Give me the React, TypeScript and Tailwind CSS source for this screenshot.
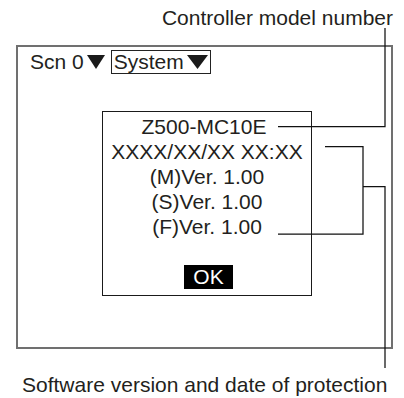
import React from "react";

function Tri({ w, h }: { w: number; h: number }) {
  return (
    <svg width={w} height={h} viewBox={`0 0 ${w} ${h}`} className="block">
      <polygon points={`0,0 ${w},0 ${w / 2},${h}`} fill="#1a1a1a" />
    </svg>
  );
}

export default function App() {
  return (
    <div className="relative w-[404px] h-[398px] bg-white text-[#231f20] font-['Liberation_Sans',Arial,sans-serif] text-[21px] overflow-hidden">
      <div className="flex justify-end pr-[11px] pt-[5px] leading-[25px]">
        Controller model number
      </div>

      <div className="ml-[16px] mt-[15px] w-[377px] h-[304px] border-2 border-[#707070] pt-[3px] pl-[12px]">
        <div className="flex items-center h-[24px]">
          <span className="leading-[24px]">Scn 0</span>
          <span className="ml-[3px]">
            <Tri w={18} h={14} />
          </span>
          <div className="ml-[6px] h-[24px] border border-[#222] flex items-center pl-[2px] pr-[2px]">
            <span className="leading-[22px]">System</span>
            <span className="ml-[3px]">
              <Tri w={21} h={14} />
            </span>
          </div>
        </div>

        <div className="mt-[37px] ml-[72px] w-[210px] h-[185px] border border-[#1a1a1a] flex flex-col items-center pt-[2px] leading-[25px]">
          <div className="mr-[6px]">Z500-MC10E</div>
          <div>XXXX/XX/XX XX:XX</div>
          <div>(M)Ver. 1.00</div>
          <div>(S)Ver. 1.00</div>
          <div>(F)Ver. 1.00</div>
          <div className="mt-[26px] ml-[3px] w-[49px] h-[24px] bg-black text-white flex items-center justify-center leading-[24px]">
            OK
          </div>
        </div>
      </div>

      <div className="mt-[23px] pl-[22px] leading-[25px]">
        Software version and date of protection
      </div>

      <svg
        className="absolute left-0 top-0 pointer-events-none"
        width={404}
        height={398}
        viewBox="0 0 404 398"
      >
        <g fill="none" stroke="#111" strokeWidth={1.25}>
          <polyline points="278,126.5 385,126.5 385,28" />
          <polyline points="325,146.5 363,146.5 363,234 278,234" />
          <polyline points="363,186.5 385,186.5 385,368" />
        </g>
      </svg>
    </div>
  );
}
